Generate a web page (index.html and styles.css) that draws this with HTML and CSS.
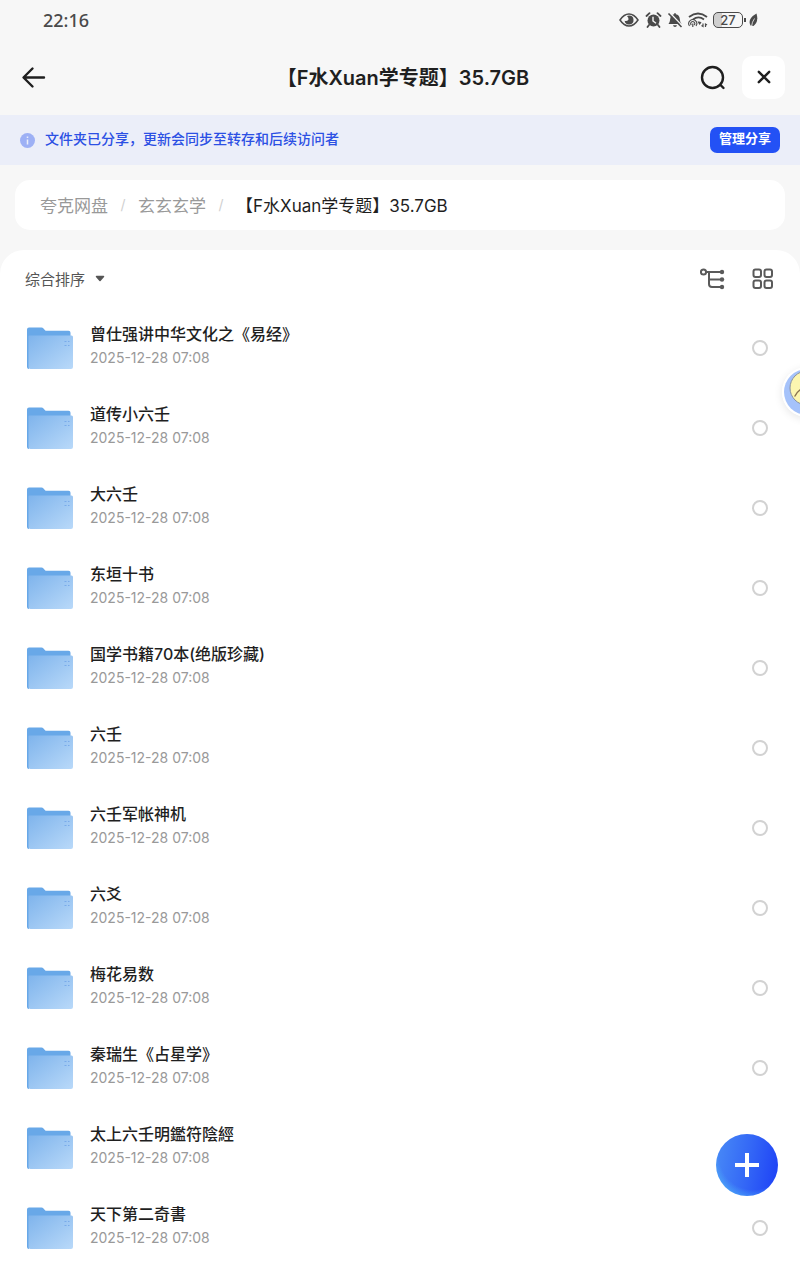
FILE: index.html
```html
<!DOCTYPE html>
<html lang="zh-CN">
<head>
    <meta charset="UTF-8">
    <meta name="viewport" content="width=device-width, initial-scale=1.0">
    <title>【F水Xuan学专题】35.7GB</title>
    <link rel="stylesheet" href="styles.css">
</head>
<body>

    <!-- Shared icons -->
    <svg class="sprite" aria-hidden="true">
        <defs>
            <linearGradient id="folderFront" x1="0" y1="0" x2="1" y2="1">
                <stop offset="0" stop-color="#7fb4ec"/>
                <stop offset="1" stop-color="#b9d9f9"/>
            </linearGradient>
        </defs>
        <symbol id="folder" viewBox="0 0 46 42">
            <path d="M0 2.500Q0 .5 2 .5h12.500q1.200 0 2 .9L18 3.200q.6.600 1.600.6H41.500q2 0 2 2V20H0z" fill="#68a8e8"/>
            <path d="M0 8h2v34q-2 0-2-2z" fill="#68a8e8"/>
            <path d="M1.500 9.500q0-1 1-1H44.500q1.500 0 1.500 1.500V40q0 2-2 2H3.500q-2 0-2-2z" fill="url(#folderFront)"/>
            <path d="M37.500 14.500h2M41 14.500h1.500M37.500 18.500h2M41 18.500h1.500" stroke="#78abea" stroke-width="1"/>
        </symbol>
    </svg>

    <div class="status-bar">
        <span class="time">22:16</span>
        <div class="status-icons">
            <svg width="20" height="16" viewBox="0 0 20 16">
                <path d="M1 8Q5 2 10 2T19 8Q15 14 10 14T1 8z" fill="none" stroke="#4a4a4a" stroke-width="1.500"/>
                <path d="M10 3.500a4.500 4.500 0 1 1-4.400 5.300Q9 9.500 9.500 7.500 9.800 5.500 8 4z" fill="#4a4a4a"/>
            </svg>
            <svg width="18" height="16" viewBox="0 0 18 16">
                <circle cx="9.500" cy="8.500" r="6" fill="#4a4a4a"/>
                <path d="M2.500 4L5.500 1.200M16.500 4L13.500 1.200M5 13L3.500 15M14 13L15.500 15" stroke="#4a4a4a" stroke-width="1.800" stroke-linecap="round"/>
                <path d="M9 4.800V9l3 2.200" fill="none" stroke="#f7f7f7" stroke-width="1.400"/>
            </svg>
            <svg width="16" height="16" viewBox="0 0 16 16">
                <path d="M8 1q.8 0 .9 1.200Q12.500 3 12.800 7q.1 3 1.700 5H1.500Q3 10 3.200 7 3.500 3 7.100 2.200 7.200 1 8 1zM6 13.200h4Q9.700 15 8 15T6 13.200z" fill="#4a4a4a"/>
                <path d="M2.500.500L15.500 14" stroke="#f7f7f7" stroke-width="1.500"/>
                <path d="M1.500 1.500L14.500 15" stroke="#4a4a4a" stroke-width="1.600"/>
            </svg>
            <svg width="20" height="16" viewBox="0 0 20 16" fill="none" stroke="#4a4a4a">
                <path d="M1 5Q10-2 19 5M5 7.500q5.500-4.200 11 0" stroke-width="1.800"/>
                <path d="M1.500 14a4 4 0 1 1 6.500 0M3.300 13a2 2 0 1 1 2.900 0" stroke-width="1.100"/>
                <path d="M4.800 11.500v3.500" stroke-width="1.200"/>
                <path d="M9.500 9.500q2.500-.5 4 1l-2 2.500z" fill="#4a4a4a" stroke="none"/>
                <path d="M15 11.500v3l-1.500-1M17.500 15v-3l1.500 1" stroke-width="1.200"/>
            </svg>
            <span class="battery">27</span>
            <svg width="10" height="14" viewBox="0 0 10 14">
                <path d="M8.500.500Q11 9 5.500 13L2.500 12.500Q-1 6 8.500.500z" fill="#4a4a4a"/>
                <path d="M6.500 5.500Q4 9 3.500 13.500" fill="none" stroke="#f7f7f7" stroke-width=".8"/>
            </svg>
        </div>
    </div>

    <header class="nav">
        <div class="nav-side">
            <button class="icon-btn" type="button" aria-label="返回">
                <svg width="26" height="24" viewBox="0 0 26 24" fill="none" stroke="#1f1f1f" stroke-width="2.400" stroke-linecap="round" stroke-linejoin="round">
                    <path d="M23 12.500H3M11.500 3.500L2.500 12.500l9 9"/>
                </svg>
            </button>
        </div>
        <h1>【F水Xuan学专题】35.7GB</h1>
        <div class="nav-side nav-right">
            <button class="icon-btn" type="button" aria-label="搜索">
                <svg width="26" height="26" viewBox="0 0 26 26" fill="none" stroke="#1f1f1f" stroke-width="2.400" stroke-linecap="round">
                    <circle cx="12.500" cy="13.500" r="10.500"/>
                    <path d="M20.500 21l3 3"/>
                </svg>
            </button>
            <button class="icon-btn close-btn" type="button" aria-label="关闭">
                <svg width="14" height="14" viewBox="0 0 14 14" fill="none" stroke="#1f1f1f" stroke-width="2.400" stroke-linecap="round">
                    <path d="M1.800 1.800l10.400 10.400M12.200 1.800L1.800 12.200"/>
                </svg>
            </button>
        </div>
    </header>

    <div class="notice">
        <svg width="15" height="15" viewBox="0 0 15 15">
            <circle cx="7.500" cy="7.500" r="7.500" fill="#9db0f5"/>
            <path d="M7.500 3.500v1.500M7.500 6.500v5" stroke="#ebeef9" stroke-width="1.500"/>
        </svg>
        <span class="notice-text">文件夹已分享，更新会同步至转存和后续访问者</span>
        <button class="share-btn" type="button">管理分享</button>
    </div>

    <nav class="breadcrumb">
        <a href="#">夸克网盘</a>
        <span class="slash">/</span>
        <a href="#">玄玄玄学</a>
        <span class="slash">/</span>
        <span class="current">【F水Xuan学专题】35.7GB</span>
    </nav>

    <main class="panel">
        <div class="toolbar">
            <button class="sort-btn" type="button">
                综合排序
                <svg width="10" height="7" viewBox="0 0 10 7"><path d="M1.500 1.500h7L5 5.500z" fill="#555" stroke="#555" stroke-width="1.500" stroke-linejoin="round"/></svg>
            </button>
            <div class="view-btns">
                <button class="icon-btn" type="button" aria-label="目录树">
                    <svg width="26" height="22" viewBox="0 0 26 22" fill="none" stroke="#5a5a5a" stroke-width="2">
                        <circle cx="3.500" cy="4" r="2.600"/>
                        <path d="M6 4h16M9 4v12q0 3 3 3H22M9 11.500H22"/>
                        <g fill="#5a5a5a" stroke="none"><circle cx="22" cy="4" r="2.200"/><circle cx="22" cy="11.500" r="2.200"/><circle cx="22" cy="19" r="2.200"/></g>
                    </svg>
                </button>
                <button class="icon-btn" type="button" aria-label="网格视图">
                    <svg width="22" height="22" viewBox="0 0 22 22" fill="none" stroke="#5a5a5a" stroke-width="2">
                        <rect x="1.500" y="1.500" width="7.500" height="7.500" rx="2"/>
                        <rect x="12.500" y="1.500" width="7.500" height="7.500" rx="2"/>
                        <rect x="1.500" y="12.500" width="7.500" height="7.500" rx="2"/>
                        <rect x="12.500" y="12.500" width="7.500" height="7.500" rx="2"/>
                    </svg>
                </button>
            </div>
        </div>

        <div id="fileList"></div>
    </main>

    <button class="assistant" type="button" aria-label="助手">
        <svg width="50" height="50" viewBox="0 0 50 50">
            <circle cx="25" cy="25" r="25" fill="#fff"/>
            <circle cx="25" cy="25" r="23" fill="#a5c2fa"/>
            <circle cx="25" cy="21" r="17" fill="#fcf6b0" stroke="#8c93a0" stroke-width="1"/>
            <path d="M13 29q2-4 6-7" fill="none" stroke="#8a7450" stroke-width="1.500" stroke-linecap="round"/>
        </svg>
    </button>

    <button class="fab" type="button" aria-label="添加">
        <svg width="26" height="26" viewBox="0 0 26 26"><path d="M13 1v24M1 13h24" stroke="#fff" stroke-width="4"/></svg>
    </button>

    <script>
        const folders = [
            "曾仕强讲中华文化之《易经》",
            "道传小六壬",
            "大六壬",
            "东垣十书",
            "国学书籍70本(绝版珍藏)",
            "六壬",
            "六壬军帐神机",
            "六爻",
            "梅花易数",
            "秦瑞生《占星学》",
            "太上六壬明鑑符陰經",
            "天下第二奇書"
        ];

        const fileList = document.getElementById("fileList");

        folders.forEach((name, i) => {
            const row = document.createElement("div");
            row.classList.add("row");
            row.innerHTML = `
                <svg class="folder" width="46" height="42"><use href="#folder"/></svg>
                <label class="info" for="file${i}">
                    <span class="name">${name}</span>
                    <span class="date">2025-12-28 07:08</span>
                </label>
                <input class="check" type="checkbox" id="file${i}">
            `;
            fileList.appendChild(row);
        });
    </script>

</body>
</html>
```
FILE: styles.css
```css
* {
    box-sizing: border-box;
}

body {
    margin: 0;
    background: #f7f7f7;
    color: #1f1f1f;
    font-family: Inter, "Noto Sans CJK SC", sans-serif;
    font-weight: 500;
}

button {
    padding: 0;
    border: none;
    background: none;
    font: inherit;
    cursor: pointer;
}

svg {
    display: block;
    flex-shrink: 0;
}

.sprite {
    position: absolute;
    width: 0;
    height: 0;
}

/* Status bar */
.status-bar {
    display: flex;
    justify-content: space-between;
    align-items: center;
    height: 40px;
    padding: 0 42px 0 43px;
    color: #4a4a4a;
}

.time {
    font-family: "Noto Sans", sans-serif;
    font-size: 18px;
}

.status-icons {
    display: flex;
    align-items: center;
    gap: 5px;
}

.battery {
    position: relative;
    width: 30px;
    height: 16px;
    border: 1px solid #4a4a4a;
    border-radius: 5px;
    background: linear-gradient(to right, #cfcfcf 27%, transparent 27%);
    font-size: 13px;
    line-height: 14px;
    text-align: center;
}

.battery::after {
    content: "";
    position: absolute;
    top: 5px;
    right: -4px;
    width: 2px;
    height: 4px;
    background: #4a4a4a;
}

/* Title bar */
.nav {
    display: flex;
    align-items: center;
    height: 75px;
    padding: 0 15px 1px 21px;
}

.nav-side {
    display: flex;
    flex: 1;
}

.nav-right {
    justify-content: flex-end;
    align-items: center;
    gap: 16px;
}

.nav h1 {
    margin: 0;
    padding-bottom: 2px;
    font-size: 20px;
    font-weight: 600;
}

.close-btn {
    display: grid;
    place-items: center;
    width: 43px;
    height: 43px;
    border-radius: 10px;
    background: #fff;
}

/* Share notice */
.notice {
    display: flex;
    align-items: center;
    gap: 10px;
    height: 50px;
    padding: 0 20px;
    background: #ebeef9;
}

.notice-text {
    flex: 1;
    padding-bottom: 4px;
    color: #2c50e4;
    font-size: 14px;
}

.share-btn {
    width: 70px;
    height: 26px;
    padding-bottom: 4px;
    border-radius: 7px;
    background: #2351f5;
    color: #fff;
    font-size: 13px;
    font-weight: 600;
    line-height: 22px;
}

/* Breadcrumb */
.breadcrumb {
    display: flex;
    align-items: center;
    height: 50px;
    margin: 15px 15px 20px;
    padding: 0 25px 2px;
    border-radius: 15px;
    background: #fff;
    font-size: 17px;
    font-weight: 400;
}

.breadcrumb a {
    color: #999;
    text-decoration: none;
}

.slash {
    width: 30px;
    color: #d0d0d0;
    font-size: 14px;
    text-align: center;
}

/* File list */
.panel {
    min-height: calc(100vh - 250px);
    border-radius: 24px 24px 0 0;
    background: #fff;
}

.toolbar {
    display: flex;
    justify-content: space-between;
    align-items: center;
    height: 58px;
    padding: 0 26px 0 25px;
}

.sort-btn {
    display: flex;
    align-items: center;
    gap: 10px;
    padding-bottom: 2px;
    color: #555;
    font-size: 15px;
    font-weight: 400;
}

.view-btns {
    display: flex;
    align-items: center;
    gap: 26px;
}

.row {
    display: flex;
    align-items: center;
    gap: 17px;
    height: 80px;
    padding: 0 32px 0 27px;
}

.info {
    display: flex;
    flex: 1;
    flex-direction: column;
    padding-bottom: 4px;
}

.name {
    font-size: 16px;
    line-height: 24px;
}

.date {
    color: #999;
    font-size: 14px;
    font-weight: 400;
    line-height: 24px;
}

.check {
    appearance: none;
    width: 16px;
    height: 16px;
    margin: 0;
    border: 2px solid #d2d2d2;
    border-radius: 50%;
}

.check:checked {
    border-color: #2351f5;
    background: #2351f5;
}

/* Floating buttons */
.assistant {
    position: fixed;
    top: 367px;
    right: -32px;
    border-radius: 50%;
    box-shadow: 0 2px 8px rgba(0, 0, 0, 0.1);
}

.fab {
    position: fixed;
    right: 22px;
    bottom: 84px;
    display: grid;
    place-items: center;
    width: 62px;
    height: 62px;
    border-radius: 50%;
    background:
        radial-gradient(circle at 60% 35%, transparent 62%, #55c4fa 95%),
        linear-gradient(100deg, #4788f6 5%, #3468f6 50%, #2147f6 90%);
}
```
